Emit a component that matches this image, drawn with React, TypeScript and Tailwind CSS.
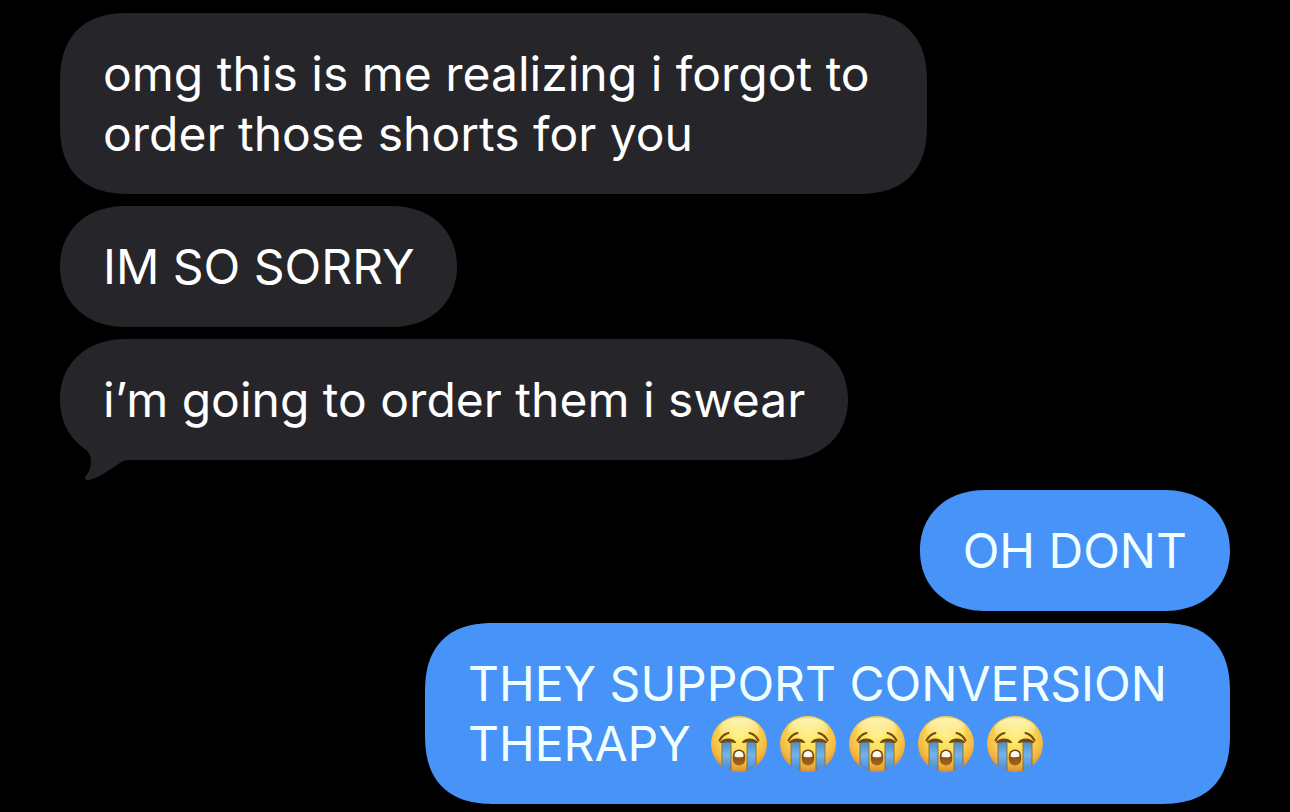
import React from 'react';
import clsx from 'clsx';

type Message = {
  text: string;
  sobs?: number;
  from: 'them' | 'me';
  tail?: boolean;
};

const messages: Message[] = [
  { from: 'them', text: 'omg this is me realizing i forgot to order those shorts for you' },
  { from: 'them', text: 'IM SO SORRY' },
  { from: 'them', text: 'i’m going to order them i swear', tail: true },
  { from: 'me', text: 'OH DONT' },
  { from: 'me', text: 'THEY SUPPORT CONVERSION THERAPY', sobs: 5 },
];

const SobDefs: React.FC = () => (
  <svg className="absolute h-0 w-0" aria-hidden="true">
    <defs>
      <radialGradient id="face" cx="0.5" cy="0.35" r="0.66">
        <stop offset="0" stopColor="#fdf07a" />
        <stop offset="0.45" stopColor="#fbdc55" />
        <stop offset="0.78" stopColor="#f3b63f" />
        <stop offset="1" stopColor="#d98a35" />
      </radialGradient>
      <linearGradient id="shine" x1="0" y1="0" x2="0" y2="1">
        <stop offset="0" stopColor="#fffde0" stopOpacity="0.7" />
        <stop offset="1" stopColor="#fffde0" stopOpacity="0" />
      </linearGradient>
      <linearGradient id="tear" x1="0" y1="0" x2="0" y2="1">
        <stop offset="0" stopColor="#4f8dc4" />
        <stop offset="0.4" stopColor="#74b5ea" />
        <stop offset="1" stopColor="#3f7fd0" />
      </linearGradient>
      <linearGradient id="mouth" x1="0" y1="0" x2="0" y2="1">
        <stop offset="0" stopColor="#6b3a10" />
        <stop offset="1" stopColor="#a8671c" />
      </linearGradient>
      <clipPath id="faceClip">
        <circle cx="28" cy="28" r="28" />
      </clipPath>
    </defs>
  </svg>
);

const Sob: React.FC = () => (
  <svg viewBox="0 0 56 56" className="size-14" role="img" aria-label="loudly crying face">
    <circle cx="28" cy="28" r="28" fill="url(#face)" />
    <ellipse cx="28" cy="13" rx="20" ry="11" fill="url(#shine)" />
    <g clipPath="url(#faceClip)">
      <rect x="11" y="26" width="9" height="32" fill="url(#tear)" />
      <rect x="36" y="26" width="9" height="32" fill="url(#tear)" />
      <path d="M11 27v30M20 27v30M36 27v30M45 27v30" stroke="#86703e" strokeWidth="1.2" fill="none" opacity="0.8" />
    </g>
    <path d="M8.5 24.5C10.5 20.5 13.5 18 17.5 17" stroke="#75480f" strokeWidth="2" strokeLinecap="round" fill="none" />
    <path d="M47.5 24.5C45.5 20.5 42.5 18 38.500 17" stroke="#75480f" strokeWidth="2" strokeLinecap="round" fill="none" />
    <path d="M9.5 26.5C13 22.5 21 21.5 24.5 26.5C20 25.5 14 25.5 9.5 26.5Z" fill="#75480f" stroke="#75480f" strokeWidth="1.2" strokeLinejoin="round" />
    <path d="M46.5 26.5C43 22.5 35 21.5 31.5 26.5C36 25.5 42 25.5 46.5 26.5Z" fill="#75480f" stroke="#75480f" strokeWidth="1.2" strokeLinejoin="round" />
    <rect x="21.8" y="33.5" width="12.4" height="16" rx="6.2" fill="url(#mouth)" />
    <path d="M23.5 39.5C23.5 36.5 25.5 35 28 35C30.5 35 32.5 36.5 32.5 39.5C32.5 41 31.5 41.2 28 41.2C24.5 41.2 23.5 41 23.5 39.5Z" fill="#fffaf0" />
  </svg>
);

const Tail: React.FC = () => (
  <svg viewBox="0 0 80 60" className="absolute -bottom-5 left-0 h-[60px] w-20 text-[#262529]" aria-hidden="true">
    <path
      d="M40 0L10 11C13 18 19 25 26 30C31 34 31.500 40 30.500 46C29.500 51 27.500 54 25.500 56.500C24 59 26 60.500 29 60C38 58 48 51 57 45C62 41.500 64 40 70 40H80V0Z"
      fill="currentColor"
    />
  </svg>
);

const Bubble: React.FC<{ message: Message }> = ({ message }) => {
  const mine = message.from === 'me';
  const long = message.text.length > 31 || !!message.sobs;

  return (
    <li
      className={clsx(
        'relative w-fit px-[43px] pt-[31px] pb-[30px] text-5xl leading-[60px]',
        mine ? 'self-end bg-[#4793f7] text-[#f0ffff]' : 'self-start bg-[#262529] text-white',
        mine ? 'max-w-[805px]' : 'max-w-[867px]',
        long ? 'rounded-[70px] [corner-shape:superellipse(1.3)]' : 'rounded-[66px/61px] [corner-shape:superellipse(1.1)]',
      )}
    >
      {message.tail && <Tail />}
      <p className="relative">
        {message.text}
        {message.sobs && (
          <span className="-my-4 ml-5 inline-flex gap-[13px] align-[-11px]">
            {Array.from({ length: message.sobs }, (_, i) => (
              <Sob key={i} />
            ))}
          </span>
        )}
      </p>
    </li>
  );
};

const App: React.FC = () => {
  const groups = [
    messages.filter((m) => m.from === 'them'),
    messages.filter((m) => m.from === 'me'),
  ];

  return (
    <main className="min-h-screen bg-black px-[60px] pt-[13px] pb-2 font-[Inter,sans-serif]">
      <SobDefs />
      <div className="flex flex-col gap-[30px]">
        {groups.map((group, i) => (
          <ul key={i} className="flex flex-col gap-3">
            {group.map((m) => (
              <Bubble key={m.text} message={m} />
            ))}
          </ul>
        ))}
      </div>
    </main>
  );
};

export default App;
